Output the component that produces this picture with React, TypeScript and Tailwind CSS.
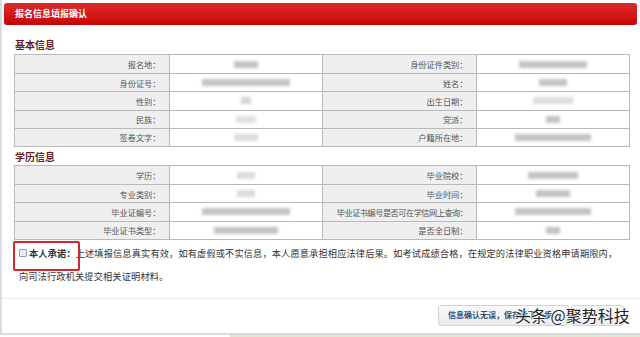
import React from "react";

type Cell = { label: string; w: number; tone?: string; tight?: boolean };
type Row = [Cell, Cell];

const basic: Row[] = [
  [{ label: "报名地", w: 24 }, { label: "身份证件类别", w: 68 }],
  [{ label: "身份证号", w: 88 }, { label: "姓名", w: 28 }],
  [{ label: "性别", w: 10, tone: "bg-[#d6d6d6]" }, { label: "出生日期", w: 40, tone: "bg-[#dedede]" }],
  [{ label: "民族", w: 20, tone: "bg-[#e0e0e0]" }, { label: "党派", w: 14 }],
  [{ label: "签卷文字", w: 24, tone: "bg-[#dddddd]" }, { label: "户籍所在地", w: 76 }],
];

const edu: Row[] = [
  [{ label: "学历", w: 18, tone: "bg-[#dcdcdc]" }, { label: "毕业院校", w: 50 }],
  [{ label: "专业类别", w: 18, tone: "bg-[#dcdcdc]" }, { label: "毕业时间", w: 34 }],
  [{ label: "毕业证编号", w: 88 }, { label: "毕业证书编号是否可在学信网上查询", w: 76, tight: true }],
  [{ label: "毕业证书类型", w: 64 }, { label: "是否全日制", w: 14 }],
];

function InfoTable({ rows }: { rows: Row[] }) {
  return (
    <div className="mx-[12px] w-[616px] border border-[#b9b9b9]">
      {rows.map((row, i) => (
        <div
          key={i}
          className={`grid grid-cols-4 h-[18.2px] ${i > 0 ? "border-t border-[#b9b9b9]" : ""}`}
        >
          {row.map((c, j) => (
            <React.Fragment key={j}>
              <div
                className={`bg-[#efefef] flex items-center justify-end pr-[8px] text-[8.2px] text-[#555] whitespace-nowrap ${
                  c.tight ? "tracking-[-0.5px]" : ""
                } ${j > 0 ? "border-l border-[#b9b9b9]" : ""}`}
              >
                {c.label}：
              </div>
              <div className="bg-white border-l border-[#b9b9b9] flex items-center justify-center">
                <div
                  className={`h-[7px] blur-[1.5px] ${c.tone ?? "bg-[#c4c4c4]"}`}
                  style={{ width: c.w }}
                />
              </div>
            </React.Fragment>
          ))}
        </div>
      ))}
    </div>
  );
}

export default function App() {
  return (
    <div
      className="relative w-[640px] h-[337px] overflow-hidden bg-white"
      style={{ fontFamily: '"Noto Sans CJK SC", "Noto Sans", sans-serif' }}
    >
      <div className="h-[335px] border-l-2 border-b-2 border-[#dcdcdc] pt-[3px]">
        <div className="mx-[2px] mr-[3px] h-[22px] rounded-[3px] bg-gradient-to-b from-[#dc2a2a] to-[#c80000] flex items-center pl-[11px]">
          <span className="text-white text-[9px] font-bold">报名信息填报确认</span>
        </div>

        <div className="pl-[13px] pt-[14px] pb-[3px] text-[10px] leading-[12px] font-bold text-[#6a1c1c]">基本信息</div>
        <InfoTable rows={basic} />

        <div className="pl-[13px] pt-[4px] pb-[2px] text-[10px] leading-[12px] font-bold text-[#6a1c1c]">学历信息</div>
        <InfoTable rows={edu} />

        <div className="relative mt-[2px] pl-[17px] text-[9.2px] leading-[23px] tracking-[0.15px] text-[#333] whitespace-nowrap">
          <div className="absolute left-[11px] top-[-1px] w-[67px] h-[30px] border-2 border-[#d02a2a] rounded-[2px]" />
          <span className="inline-block align-middle w-[8px] h-[8px] mr-[2px] border border-[#8ca0c0] bg-[#e6ecf4] rounded-[1px] -mt-[2px]" />
          <span className="font-bold">本人承诺：</span>
          上述填报信息真实有效，如有虚假或不实信息，本人愿意承担相应法律后果。如考试成绩合格，在规定的法律职业资格申请期限内，
          <br />
          向司法行政机关提交相关证明材料。
        </div>

        <div className="mt-[10px] border-t border-[#ececec] flex justify-end gap-[2px] pr-[16px] pt-[6px]">
          <div className="h-[21px] w-[131px] rounded-[3px] border border-[#d0d4d8] bg-gradient-to-b from-[#f8f9fa] to-[#e9ecef] flex items-center pl-[9px] text-[8px] font-bold text-[#2a4f7c] whitespace-nowrap overflow-hidden">
            信息确认无误，保存并下一步
          </div>
          <div className="h-[21px] w-[53px] rounded-[3px] border border-[#d0d4d8] bg-gradient-to-b from-[#f8f9fa] to-[#e9ecef]" />
        </div>
      </div>

      <div
        className="absolute left-[515px] top-[304px] text-[16px] leading-[22px] text-[#222] whitespace-nowrap"
        style={{ textShadow: "0 0 2px #fff, 0 0 2px #fff, 0 0 3px #fff" }}
      >
        头条&nbsp;@聚势科技
      </div>
      <div className="absolute left-[230px] bottom-0 w-[410px] h-[2px] bg-[#dfe8cf]" />
    </div>
  );
}
